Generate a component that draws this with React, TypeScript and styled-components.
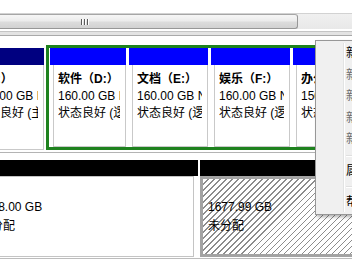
import React from "react";
import styled, { createGlobalStyle } from "styled-components";

const GlobalStyle = createGlobalStyle`
  html, body {
    margin: 0;
    padding: 0;
    background: #ffffff;
  }
  body {
    font-family: "Liberation Sans", "Noto Sans CJK SC", sans-serif;
    font-size: 12px;
    color: #000;
  }
`

const Page = styled.div`
  position: relative;
  width: 352px;
  height: 264px;
  overflow: hidden;
  background: #fff;
`

const ListPaneEnd = styled.div`
  height: 13px;
  background: #fff;
`

const HScroll = styled.div`
  height: 15px;
  border-top: 1px solid #d2d2d2;
  background: linear-gradient(#f0f0f0, #e8e8e8);
  display: flex;
`

const Thumb = styled.div`
  margin-left: -4px;
  width: 302px;
  height: 15px;
  box-sizing: border-box;
  border: 1px solid #979797;
  border-top-color: #a6a6a6;
  border-radius: 0 3px 3px 0;
  background: linear-gradient(#f6f6f6 0%, #ececec 45%, #dcdcdc 55%, #d2d2d2 100%);
  display: flex;
  justify-content: center;
  align-items: center;
`

const Grip = styled.div`
  display: flex;
  margin-left: -124px;
  span {
    width: 1px;
    height: 6px;
    background: #5c5c5c;
    box-shadow: 1px 0 0 #fff;
    margin-right: 2px;
  }
`

const Splitter = styled.div`
  height: 7px;
  box-sizing: border-box;
  border-top: 2px solid #fff;
  background: #e3e3e3;
  box-shadow: inset 0 1px 0 #c4c4c4, inset 0 -1px 0 #a9a9a9;
`

const DiskArea = styled.div`
  background: #fff;
  padding-top: 9px;
`

const DiskRow = styled.div<{ $shift: number }>`
  display: flex;
  margin-left: ${(p) => -p.$shift}px;
  align-items: stretch;
`

const Partition = styled.div<{ $w: number; $padL?: number; $padR?: number; $top?: number }>`
  flex: 0 0 ${(p) => p.$w}px;
  width: ${(p) => p.$w}px;
  min-width: 0;
  box-sizing: border-box;
  padding: ${(p) => p.$top ?? 0}px ${(p) => p.$padR ?? 3}px 0 ${(p) => p.$padL ?? 0}px;
  display: flex;
  flex-direction: column;
  overflow: hidden;
`

const Strip = styled.div<{ $color: string; $h?: number }>`
  height: ${(p) => p.$h ?? 17}px;
  background: ${(p) => p.$color};
  flex: none;
`

const Body = styled.div<{ $inL?: number; $inR?: number }>`
  flex: 1;
  min-width: 0;
  margin: 0 ${(p) => p.$inR ?? 0}px 0 ${(p) => p.$inL ?? 3}px;
  border: 1px solid #c9c9c9;
  border-top: none;
  padding: 6px 0 0 4px;
  background: #fff;
`

const Lines = styled.div<{ $lh?: number }>`
  min-width: 0;
  flex: 1;
  margin-right: 5px;
  overflow: hidden;
  white-space: nowrap;
  line-height: ${(p) => p.$lh ?? 17}px;
`

const Label = styled.div`
  font-weight: bold;
`

const Extended = styled.div`
  display: flex;
  flex: none;
  height: 105px;
  box-sizing: border-box;
  border: 3px solid #1e821e;
  border-right: none;
`

const RowRule = styled.div`
  height: 2px;
  border-bottom: 1px solid #b4b4b4;
  margin-bottom: 7px;
`

const Row2 = styled.div`
  display: flex;
  height: 98px;
  border-bottom: 1px solid #bdbdbd;
`

const Unalloc = styled.div<{ $w: number }>`
  flex: 0 0 ${(p) => p.$w}px;
  display: flex;
  flex-direction: column;
  margin-left: -21px;
  padding-right: 2px;
  box-sizing: border-box;
  overflow: hidden;
`

const UnallocBody = styled.div<{ $hatched?: boolean }>`
  flex: 1;
  display: flex;
  align-items: center;
  box-sizing: border-box;
  margin-right: ${(p) => (p.$hatched ? 0 : 4)}px;
  border: ${(p) => (p.$hatched ? "3px solid #a3a3a3" : "1px solid #c4c4c4")};
  ${(p) => (p.$hatched ? "border-right: none;" : "border-left: none;")}
  padding-left: ${(p) => (p.$hatched ? 5 : 0)}px;
  margin-bottom: 1px;
  background: ${(p) =>
    p.$hatched
      ? "repeating-linear-gradient(135deg, #ffffff 0px, #ffffff 3.4px, #8c8c8c 3.4px, #8c8c8c 4.25px)"
      : "#fff"};
`

const HatchCell = styled.div`
  flex: 1;
  display: flex;
  flex-direction: column;
`

const Menu = styled.div`
  position: absolute;
  left: 315px;
  top: 40px;
  width: 220px;
  height: 175px;
  box-sizing: border-box;
  padding: 2px;
  background: #f0f0f0;
  border: 1px solid #979797;
  box-shadow: 2px 2px 3px rgba(0, 0, 0, 0.3);
  &::before {
    content: "";
    position: absolute;
    left: 27px;
    top: 2px;
    bottom: 2px;
    width: 1px;
    background: #e2e3e3;
    box-shadow: 1px 0 0 #fff;
  }
`

const Item = styled.div<{ $off?: boolean }>`
  height: 21.5px;
  line-height: 21.5px;
  padding-left: 28px;
  white-space: nowrap;
  color: ${(p) => (p.$off ? "#6d6d6d" : "#000")};
`

const Sep = styled.div`
  height: 1px;
  margin: 4px 2px 4px 28px;
  background: #e0e0e0;
  border-bottom: 1px solid #fff;
`

const logical = [
  { w: 80, padL: 1, name: "软件（D:）", size: "160.00 GB NTFS" },
  { w: 82, padL: 0, name: "文档（E:）", size: "160.00 GB NTFS" },
  { w: 82, padL: 0, name: "娱乐（F:）", size: "160.00 GB NTFS" },
  { w: 82, padL: 0, name: "办公（G:）", size: "150.00 GB NTFS" },
]

export default function App() {
  return (
    <>
      <GlobalStyle />
      <Page>
        <ListPaneEnd />
        <HScroll>
          <Thumb>
            <Grip>
              <span />
              <span />
              <span />
            </Grip>
          </Thumb>
        </HScroll>
        <Splitter />
        <DiskArea>
          <DiskRow $shift={32}>
            <Partition $w={78} $padR={2} $top={3}>
              <Strip $color="#000080" />
              <Body $inR={0}>
                <Lines>
                  <Label>（C:）</Label>
                  <div>100.00 GB NTFS</div>
                  <div>状态良好 (主分区)</div>
                </Lines>
              </Body>
            </Partition>
            <Extended>
              {logical.map((d) => (
                <Partition key={d.name} $w={d.w} $padL={d.padL}>
                  <Strip $color="#0000ff" />
                  <Body>
                    <Lines>
                      <Label>{d.name}</Label>
                      <div>{d.size}</div>
                      <div>状态良好 (逻辑驱动器)</div>
                    </Lines>
                  </Body>
                </Partition>
              ))}
            </Extended>
          </DiskRow>
          <RowRule />
          <Row2>
            <Unalloc $w={221}>
              <Strip $color="#000" $h={16} />
              <UnallocBody>
                <Lines $lh={19}>
                  <div>1128.00 GB</div>
                  <div>未分配</div>
                </Lines>
              </UnallocBody>
            </Unalloc>
            <HatchCell>
              <Strip $color="#000" $h={16} />
              <UnallocBody $hatched>
                <Lines $lh={19}>
                  <div>1677.99 GB</div>
                  <div>未分配</div>
                </Lines>
              </UnallocBody>
            </HatchCell>
          </Row2>
        </DiskArea>
        <Menu>
          <Item>新建简单卷(I)...</Item>
          <Item $off>新建跨区卷(N)...</Item>
          <Item $off>新建带区卷(T)...</Item>
          <Item $off>新建镜像卷(R)...</Item>
          <Item $off>新建 RAID-5 卷(W)...</Item>
          <Sep />
          <Item>属性(P)</Item>
          <Sep />
          <Item>帮助(H)</Item>
        </Menu>
      </Page>
    </>
  );
}
